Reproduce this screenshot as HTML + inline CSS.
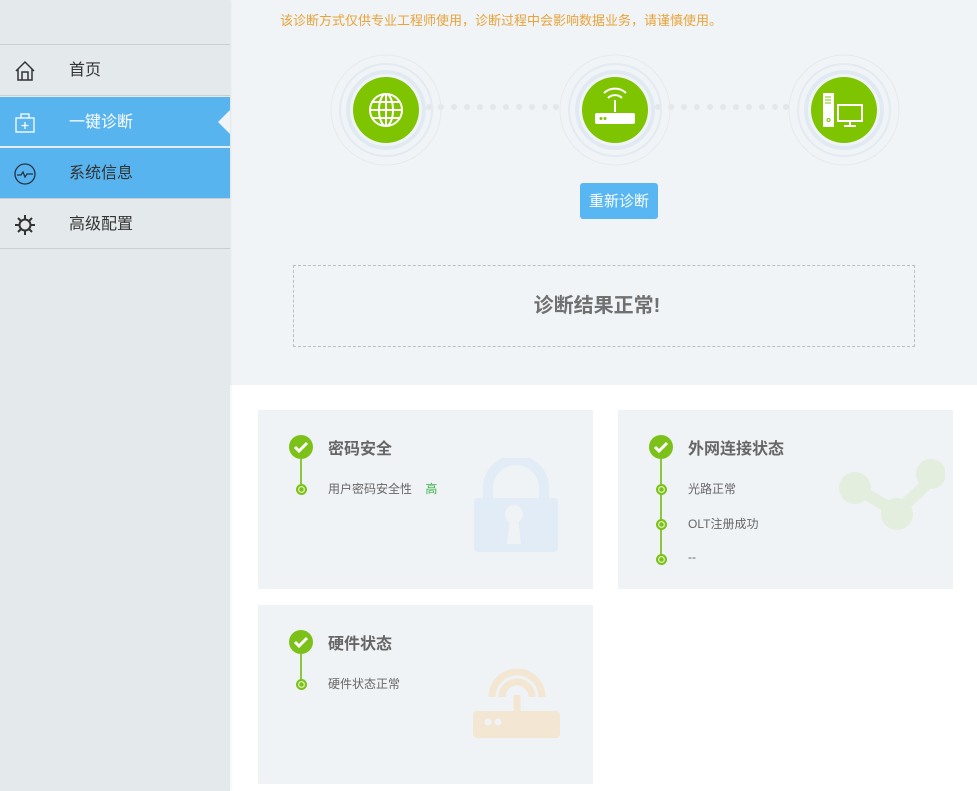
<!DOCTYPE html>
<html><head><meta charset="utf-8"><style>
*{margin:0;padding:0;box-sizing:border-box}
body{width:977px;height:791px;overflow:hidden;position:relative;background:#fff;font-family:"Liberation Sans","Noto Sans CJK SC",sans-serif}
.abs{position:absolute}
#side{left:0;top:0;width:230px;height:791px;background:#e4e9ec;box-shadow:1px 0 2px rgba(0,0,0,.06);z-index:2}
.item{position:absolute;left:0;width:230px;height:50px;font-size:16px;color:#333;line-height:52px;padding-left:69px}
.line{position:absolute;left:0;width:230px;height:1px;background:#c9cfd3}
.ic{position:absolute;left:13px;top:14px;width:24px;height:24px}
#top{left:230px;top:0;width:747px;height:385px;background:#f0f4f6}
.card{position:absolute;background:#f0f3f6;width:335px;height:179px}
.chk{position:absolute;left:31px;top:25px;width:24px;height:24px;border-radius:50%;background:#7cc11a}
.vl{position:absolute;left:42px;width:2px;background:#8cc63f}
.dot{position:absolute;left:38px;width:11px;height:11px;border-radius:50%;background:#7cc11a}
.dot:after{content:"";position:absolute;left:2px;top:2px;width:7px;height:7px;border-radius:50%;background:#7cc11a;box-shadow:0 0 0 1.3px #d8f0b0 inset}
.tt{position:absolute;left:70px;top:25px;font-size:16px;font-weight:bold;color:#666}
.tx{position:absolute;left:70px;font-size:12px;color:#666}
</style></head><body>
<div id="side" class="abs">
 <div class="line" style="top:44px"></div>
 <div class="item" style="top:45px"><svg class="ic" viewBox="0 0 24 24" fill="none" stroke="#333" stroke-width="1.5"><path d="M3 12L12 3l9 9M5 10v11h14V10M9 21v-8h6v8"/></svg>首页</div>
 <div class="line" style="top:95px"></div>
 <div class="item" style="top:97px;background:#57b4ef;color:#fff"><svg class="ic" viewBox="0 0 24 24" fill="none" stroke="#fff" stroke-width="1.3"><rect x="3" y="7" width="18" height="14"/><path d="M8 7V3h8v4M12 11v7M8.5 14.5h7"/></svg>一键诊断</div>
 <div class="abs" style="left:218px;top:110px;width:0;height:0;border-top:12px solid transparent;border-bottom:12px solid transparent;border-right:12px solid #f0f4f6"></div>
 <div class="line" style="top:146px;background:#e8eef2"></div>
 <div class="item" style="top:148px;background:#57b4ef"><svg class="ic" viewBox="0 0 24 24" fill="none" stroke="#234" stroke-width="1.3"><circle cx="12" cy="12" r="10"/><path d="M4 13h4l2-3 2 5 2-3h6"/></svg>系统信息</div>
 <div class="line" style="top:198px"></div>
 <div class="item" style="top:199px"><svg class="ic" viewBox="0 0 24 24" fill="none" stroke="#333" stroke-width="2"><circle cx="12" cy="12" r="5.5"/><path d="M12 2v4M12 18v4M2 12h4M18 12h4M5 5l3 3M16 16l3 3M5 19l3-3M16 8l3-3"/></svg>高级配置</div>
 <div class="line" style="top:248px"></div>
</div>
<div id="top" class="abs">
 <div class="abs" style="left:50px;top:10px;font-size:13px;color:#e8a33a">该诊断方式仅供专业工程师使用，诊断过程中会影响数据业务，请谨慎使用。</div>
 <svg class="abs" style="left:0;top:0" width="747" height="180">
  <g fill="#e2e7ea">
   <circle cx="199" cy="107" r="3"/><circle cx="211" cy="107" r="3"/><circle cx="224" cy="107" r="3"/><circle cx="237" cy="107" r="3"/><circle cx="250" cy="107" r="3"/><circle cx="263" cy="107" r="3"/><circle cx="276" cy="107" r="3"/><circle cx="289" cy="107" r="3"/><circle cx="302" cy="107" r="3"/><circle cx="315" cy="107" r="3"/><circle cx="326" cy="107" r="3"/>
   <circle cx="428" cy="107" r="3"/><circle cx="441" cy="107" r="3"/><circle cx="454" cy="107" r="3"/><circle cx="467" cy="107" r="3"/><circle cx="480" cy="107" r="3"/><circle cx="493" cy="107" r="3"/><circle cx="506" cy="107" r="3"/><circle cx="519" cy="107" r="3"/><circle cx="532" cy="107" r="3"/><circle cx="545" cy="107" r="3"/><circle cx="556" cy="107" r="3"/>
  </g>
  <g fill="none" stroke="#e6eaed">
   <circle cx="156" cy="110" r="55"/><circle cx="156" cy="110" r="46" stroke="#e3eaf1" stroke-width="2"/><circle cx="156" cy="110" r="38" stroke="#e1e9f3" stroke-width="4"/>
   <circle cx="385" cy="110" r="55"/><circle cx="385" cy="110" r="46" stroke="#e3eaf1" stroke-width="2"/><circle cx="385" cy="110" r="38" stroke="#e1e9f3" stroke-width="4"/>
   <circle cx="614" cy="110" r="55"/><circle cx="614" cy="110" r="46" stroke="#e3eaf1" stroke-width="2"/><circle cx="614" cy="110" r="38" stroke="#e1e9f3" stroke-width="4"/>
  </g>
  <g fill="#7fc400"><circle cx="156" cy="110" r="33"/><circle cx="385" cy="110" r="33"/><circle cx="614" cy="110" r="33"/></g>
  <g fill="none" stroke="#fff" stroke-width="2"><circle cx="156" cy="110" r="16"/><ellipse cx="156" cy="110" rx="7" ry="16"/><path d="M156 94v32M140 110h32M142 102h28M142 118h28"/>
   <path d="M378 98a10 10 0 0 1 14 0M374 93a16 16 0 0 1 22 0M385 100v12"/></g>
  <rect x="365" y="113" width="40" height="11" rx="2" fill="#fff"/><circle cx="371" cy="118.5" r="1.5" fill="#7fc400"/><circle cx="375" cy="118.5" r="1.5" fill="#7fc400"/>
  <rect x="593" y="93" width="11" height="34" fill="#fff"/><path d="M595 97h6M595 100h6M595 103h6" stroke="#7fc400"/><circle cx="598.5" cy="120" r="1.5" fill="none" stroke="#7fc400"/>
  <rect x="608" y="105" width="24" height="16" fill="none" stroke="#fff" stroke-width="2"/><path d="M620 121v4M614 126h12" stroke="#fff" stroke-width="2"/>
 </svg>
 <div class="abs" style="left:350px;top:183px;width:78px;height:36px;background:#58b6f3;border-radius:3px;color:#fff;font-size:15px;line-height:38px;text-align:center">重新诊断</div>
 <div class="abs" style="left:63px;top:265px;width:622px;height:82px;border:1px dashed #b8c0c4;text-align:center;line-height:80px;font-size:20px;font-weight:bold;color:#707070;padding-right:14px">诊断结果正常!</div>
</div>
<div class="card" style="left:258px;top:410px">
 <svg class="abs" style="left:214px;top:48px" width="88" height="96"><path d="M16 40V30a28 28 0 0 1 56 0v10" fill="none" stroke="#e1ecf6" stroke-width="10"/><rect x="2" y="40" width="84" height="54" rx="4" fill="#e1ecf6"/><circle cx="42" cy="56" r="9" fill="#f0f3f6"/><path d="M38 60h8l3 26h-14z" fill="#f0f3f6"/></svg>
 <div class="vl" style="top:49px;height:28px"></div>
 <div class="chk"><svg width="24" height="24"><path d="M6 12l4 4 8-8" fill="none" stroke="#fff" stroke-width="3"/></svg></div>
 <div class="tt">密码安全</div>
 <div class="dot" style="top:74px"></div>
 <div class="tx" style="top:70px">用户密码安全性 &nbsp;&nbsp; <span style="color:#3ab54a">高</span></div>
</div>
<div class="card" style="left:618px;top:410px">
 <svg class="abs" style="left:215px;top:48px" width="112" height="88"><path d="M22 30l42 24 34-32" fill="none" stroke="#e4eedf" stroke-width="12"/><circle cx="22" cy="30" r="16" fill="#e4eedf"/><circle cx="64" cy="56" r="16" fill="#e4eedf"/><circle cx="98" cy="16" r="15" fill="#e4eedf"/></svg>
 <div class="vl" style="top:49px;height:100px"></div>
 <div class="chk"><svg width="24" height="24"><path d="M6 12l4 4 8-8" fill="none" stroke="#fff" stroke-width="3"/></svg></div>
 <div class="tt">外网连接状态</div>
 <div class="dot" style="top:74px"></div><div class="tx" style="top:70px">光路正常</div>
 <div class="dot" style="top:109px"></div><div class="tx" style="top:105px">OLT注册成功</div>
 <div class="dot" style="top:144px"></div><div class="tx" style="top:140px">--</div>
</div>
<div class="card" style="left:258px;top:605px">
 <svg class="abs" style="left:214px;top:50px" width="90" height="84"><path d="M20 42a25 25 0 0 1 50 0M30 42a15 15 0 0 1 30 0" fill="none" stroke="#f3e7d3" stroke-width="7"/><path d="M45 40v20" stroke="#f3e7d3" stroke-width="7"/><rect x="1" y="56" width="87" height="27" rx="4" fill="#f3e7d3"/><circle cx="16" cy="67" r="3.5" fill="#f0f3f6"/><circle cx="26" cy="67" r="3.5" fill="#f0f3f6"/></svg>
 <div class="vl" style="top:49px;height:28px"></div>
 <div class="chk"><svg width="24" height="24"><path d="M6 12l4 4 8-8" fill="none" stroke="#fff" stroke-width="3"/></svg></div>
 <div class="tt">硬件状态</div>
 <div class="dot" style="top:74px"></div><div class="tx" style="top:70px">硬件状态正常</div>
</div>
</body></html>
